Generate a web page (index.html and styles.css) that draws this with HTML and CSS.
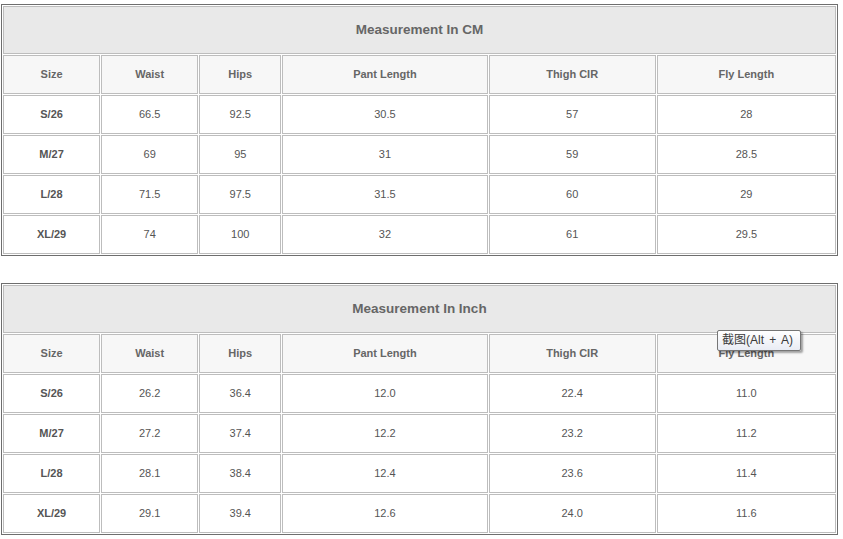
FILE: index.html
```html
<!DOCTYPE html>
<html>
<head>
<meta charset="utf-8">
<link rel="stylesheet" href="styles.css">
</head>
<body>
<div class="page">
  <table class="size-table">
    <colgroup>
      <col class="c-size"><col class="c-waist"><col class="c-hips"><col class="c-pant"><col class="c-thigh"><col class="c-fly">
    </colgroup>
    <tr class="title-row"><td colspan="6">Measurement In CM</td></tr>
    <tr class="head-row"><td>Size</td><td>Waist</td><td>Hips</td><td>Pant Length</td><td>Thigh CIR</td><td>Fly Length</td></tr>
    <tr class="data-row"><td class="sz">S/26</td><td>66.5</td><td>92.5</td><td>30.5</td><td>57</td><td>28</td></tr>
    <tr class="data-row"><td class="sz">M/27</td><td>69</td><td>95</td><td>31</td><td>59</td><td>28.5</td></tr>
    <tr class="data-row"><td class="sz">L/28</td><td>71.5</td><td>97.5</td><td>31.5</td><td>60</td><td>29</td></tr>
    <tr class="data-row"><td class="sz">XL/29</td><td>74</td><td>100</td><td>32</td><td>61</td><td>29.5</td></tr>
  </table>

  <div class="second">
    <table class="size-table">
      <colgroup>
        <col class="c-size"><col class="c-waist"><col class="c-hips"><col class="c-pant"><col class="c-thigh"><col class="c-fly">
      </colgroup>
      <tr class="title-row"><td colspan="6">Measurement In Inch</td></tr>
      <tr class="head-row"><td>Size</td><td>Waist</td><td>Hips</td><td>Pant Length</td><td>Thigh CIR</td><td>Fly Length</td></tr>
      <tr class="data-row"><td class="sz">S/26</td><td>26.2</td><td>36.4</td><td>12.0</td><td>22.4</td><td>11.0</td></tr>
      <tr class="data-row"><td class="sz">M/27</td><td>27.2</td><td>37.4</td><td>12.2</td><td>23.2</td><td>11.2</td></tr>
      <tr class="data-row"><td class="sz">L/28</td><td>28.1</td><td>38.4</td><td>12.4</td><td>23.6</td><td>11.4</td></tr>
      <tr class="data-row"><td class="sz">XL/29</td><td>29.1</td><td>39.4</td><td>12.6</td><td>24.0</td><td>11.6</td></tr>
    </table>
    <div class="tooltip">截图(Alt + A)</div>
  </div>
</div>
</body>
</html>
```

FILE: styles.css
```css
html, body {
  margin: 0;
  padding: 0;
  background: #ffffff;
}

.page {
  padding: 4px 0 0 1px;
  font-family: "Liberation Sans", Arial, sans-serif;
  color: #555555;
}

.size-table {
  width: 837px;
  table-layout: fixed;
  border-collapse: separate;
  border-spacing: 1px;
  border: 1px solid #6e6e6e;
  font-size: 11px;
}

.size-table td {
  border: 1px solid #bdbdbd;
  text-align: center;
  vertical-align: middle;
  padding: 0 0 2px 0;
}

.c-size { width: 97px; }
.c-waist { width: 97px; }
.c-hips { width: 82px; }
.c-pant { width: 205px; }
.c-thigh { width: 167px; }
.c-fly { width: 179px; }

.title-row td {
  height: 44px;
  background: #e9e9e9;
  font-size: 13.5px;
  font-weight: bold;
  color: #666666;
}

.head-row td {
  height: 35px;
  background: #f7f7f7;
  font-weight: bold;
  color: #666666;
}

.data-row td {
  height: 35px;
  background: #ffffff;
  color: #555555;
}

.data-row td.sz {
  font-weight: bold;
}

.second {
  position: relative;
  margin-top: 27px;
}

.tooltip {
  position: absolute;
  left: 716px;
  top: 47px;
  padding: 3px 7px 3px 4px;
  border: 1px solid #767676;
  border-radius: 2px;
  background: linear-gradient(#ffffff, #e9ecf4);
  box-shadow: 2px 2px 2px rgba(0, 0, 0, 0.35);
  font-family: "Liberation Sans", "Noto Sans CJK SC", sans-serif;
  font-size: 12px;
  word-spacing: 2px;
  color: #3a3a3a;
  white-space: nowrap;
  line-height: 13px;
}
```
